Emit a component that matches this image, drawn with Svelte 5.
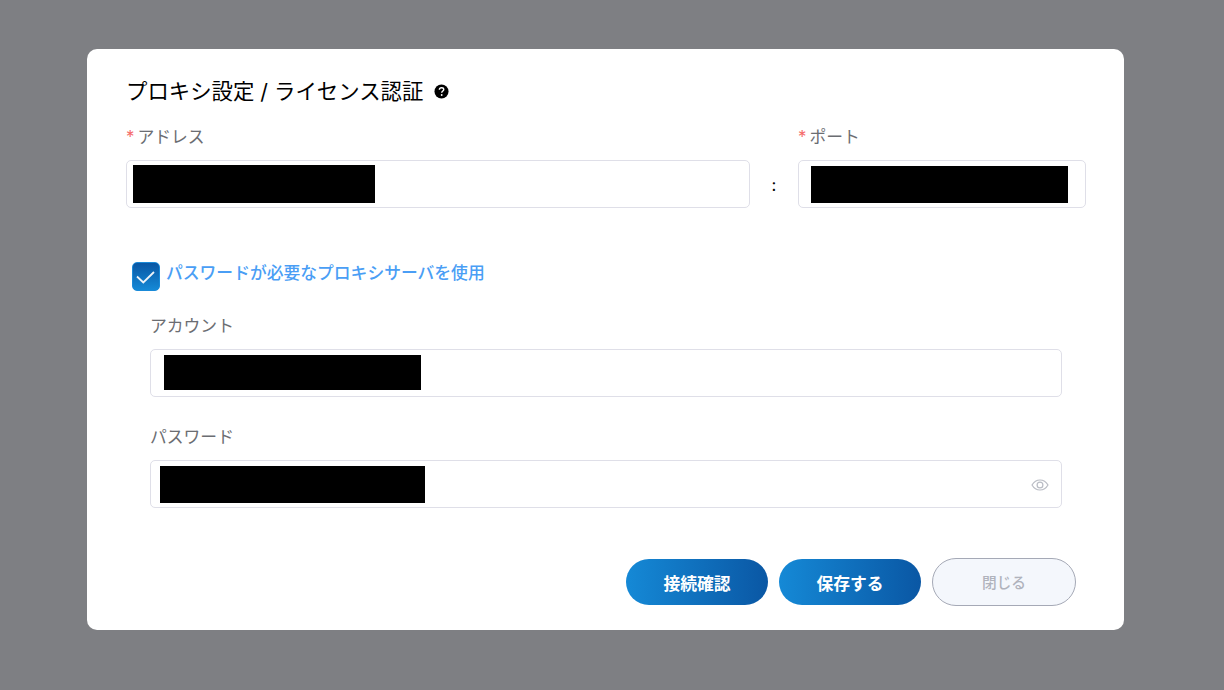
<script>
  let usePassword = $state(true);
</script>

<div class="overlay">
  <div class="modal">
    <h2 class="title">
      プロキシ設定 / ライセンス認証
      <svg class="help" viewBox="0 0 16 16" width="16" height="16">
        <circle cx="8" cy="8" r="7.5" fill="#000" />
        <path d="M5.700 6.200c.1-1.400 1-2.200 2.400-2.200s2.300.8 2.300 1.900c0 .9-.5 1.400-1.200 1.800-.6.4-.9.7-.9 1.300v.3" fill="none" stroke="#fff" stroke-width="1.500" />
        <circle cx="8.200" cy="11.700" r="1" fill="#fff" />
      </svg>
    </h2>

    <div class="server">
      <div class="field address">
        <label class="label" for="address"><span class="req">*</span>アドレス</label>
        <div class="input" id="address"><span class="mask mask-address"></span></div>
      </div>
      <span class="colon">:</span>
      <div class="field port">
        <label class="label" for="port"><span class="req">*</span>ポート</label>
        <div class="input" id="port"><span class="mask mask-port"></span></div>
      </div>
    </div>

    <button class="check" onclick={() => (usePassword = !usePassword)}>
      <span class="box">
        {#if usePassword}
          <svg viewBox="0 0 28 28" width="28" height="28">
            <path d="M5 14.500l6.300 6L22 10" fill="none" stroke="#eef3f8" stroke-width="1.800" />
          </svg>
        {/if}
      </span>
      <span class="check-text">パスワードが必要なプロキシサーバを使用</span>
    </button>

    <div class="auth">
      <div class="field">
        <label class="label" for="account">アカウント</label>
        <div class="input" id="account"><span class="mask mask-account"></span></div>
      </div>
      <div class="field">
        <label class="label" for="password">パスワード</label>
        <div class="input" id="password">
          <span class="mask mask-password"></span>
          <svg class="eye" viewBox="0 0 18 14" width="18" height="14">
            <path d="M1 7c2-3.400 4.700-5 8-5s6 1.600 8 5c-2 3.400-4.700 5-8 5s-6-1.600-8-5z" fill="none" stroke="#b9bcc4" stroke-width="1.200" />
            <circle cx="9" cy="7" r="2.900" fill="none" stroke="#b9bcc4" stroke-width="1.200" />
          </svg>
        </div>
      </div>
    </div>

    <div class="actions">
      <button class="btn primary">接続確認</button>
      <button class="btn primary">保存する</button>
      <button class="btn disabled" disabled>閉じる</button>
    </div>
  </div>
</div>

<style>
  :global(body) {
    margin: 0;
    font-family: "Inter", "Noto Sans CJK JP", sans-serif;
  }

  .overlay {
    height: 690px;
    box-sizing: border-box;
    padding: 49px 100px 60px 87px;
    background: #7e7f83;
  }

  .modal {
    height: 581px;
    box-sizing: border-box;
    padding: 26px 38px 0 39px;
    background: #fff;
    border-radius: 10px;
  }

  .title {
    display: flex;
    align-items: center;
    gap: 11px;
    margin: 0;
    height: 30px;
    box-sizing: border-box;
    padding-bottom: 2px;
    font-size: 21.4px;
    font-weight: 400;
    color: #000;
  }

  .help {
    width: 15px;
    height: 15px;
    margin-top: 4px;
  }

  .server {
    display: flex;
    align-items: flex-end;
    margin-top: 20px;
  }

  .address {
    width: 624px;
  }

  .port {
    width: 288px;
  }

  .colon {
    width: 48px;
    height: 48px;
    line-height: 50px;
    text-align: center;
    font-size: 16.8px;
    color: #000;
  }

  .label {
    display: block;
    height: 24px;
    line-height: 24px;
    margin-bottom: 11px;
    font-size: 16.8px;
    color: #6b6d72;
  }

  .req {
    margin-right: 3px;
    color: #f56c6c;
  }

  .input {
    display: flex;
    align-items: center;
    justify-content: space-between;
    height: 48px;
    box-sizing: border-box;
    background: #fff;
    border: 1px solid #dfdfe8;
    border-radius: 5px;
  }

  .mask {
    display: block;
    background: #000;
  }

  .mask-address {
    width: 242px;
    height: 38px;
    margin-left: 6px;
  }

  .mask-port {
    width: 257px;
    height: 37px;
    margin-left: 12px;
  }

  .mask-account {
    width: 257px;
    height: 35px;
    margin: 0 0 2px 13px;
  }

  .mask-password {
    width: 265px;
    height: 37px;
    margin-left: 9px;
  }

  .eye {
    margin: 2px 12px 0 0;
  }

  .check {
    display: flex;
    align-items: flex-start;
    gap: 6px;
    margin: 54px 0 0 6px;
    padding: 0;
    border: 0;
    background: none;
    font: inherit;
    cursor: pointer;
  }

  .box {
    display: block;
    width: 28px;
    height: 29px;
    box-sizing: border-box;
    background: linear-gradient(0deg, #1589d6, #0a57a4);
    border: 1px solid #1a8ad8;
    border-radius: 5px;
  }

  .box svg {
    display: block;
    margin: -1px;
  }

  .check-text {
    line-height: 22px;
    font-size: 16.8px;
    font-weight: 500;
    color: #4a9ef5;
  }

  .auth {
    display: flex;
    flex-direction: column;
    gap: 28px;
    width: 912px;
    margin: 23px 0 0 24px;
  }

  .actions {
    display: flex;
    justify-content: flex-end;
    align-items: center;
    gap: 11px;
    margin: 50px 10px 0 0;
  }

  .btn {
    width: 142px;
    height: 46px;
    padding: 2px 0 0;
    border: 0;
    border-radius: 23px;
    font-family: inherit;
    font-size: 16.8px;
    font-weight: 700;
  }

  .primary {
    background: linear-gradient(90deg, #1589d6, #0a57a4);
    color: #fff;
    cursor: pointer;
  }

  .disabled {
    width: 144px;
    height: 48px;
    padding: 0 0 2px;
    border-radius: 24px;
    background: #f4f7fc;
    border: 1px solid #a5a9b6;
    font-size: 14.7px;
    font-weight: 500;
    color: #b0b3bc;
  }
</style>
